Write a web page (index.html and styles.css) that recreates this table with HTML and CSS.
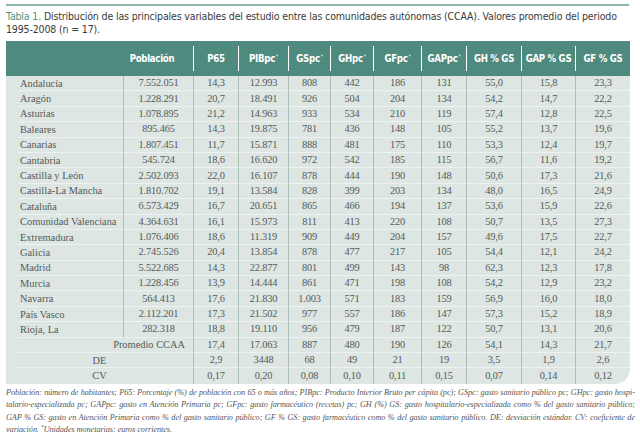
FILE: index.html
```html
<!DOCTYPE html>
<html lang="es">
<head>
<meta charset="utf-8">
<title>Tabla 1</title>
<link rel="stylesheet" href="styles.css">
</head>
<body>
<div class="page">
  <div class="rule"></div>
  <p class="title"><span class="lbl">Tabla 1.</span> Distribución de las principales variables del estudio entre las comunidades autónomas (CCAA). Valores promedio del periodo<br>1995-2008 (n = 17).</p>
  <div class="tbl">
    <table>
      <colgroup>
        <col class="c-name"><col class="c-pob"><col class="c-p65"><col class="c-pib"><col class="c-gs"><col class="c-gh"><col class="c-gf"><col class="c-gap"><col class="c-pct"><col class="c-pct2"><col class="c-pct">
      </colgroup>
      <thead>
        <tr>
          <th></th>
          <th><div class="h first">Población</div></th>
          <th><div class="h">P65</div></th>
          <th><div class="h">PIBpc<sup>*</sup></div></th>
          <th><div class="h">GSpc<sup>*</sup></div></th>
          <th><div class="h">GHpc<sup>*</sup></div></th>
          <th><div class="h">GFpc<sup>*</sup></div></th>
          <th><div class="h">GAPpc<sup>*</sup></div></th>
          <th><div class="h">GH % GS</div></th>
          <th><div class="h">GAP % GS</div></th>
          <th><div class="h">GF % GS</div></th>
        </tr>
      </thead>
      <tbody>
        <tr><td class="name">Andalucía</td><td>7.552.051</td><td>14,3</td><td>12.993</td><td>808</td><td>442</td><td>186</td><td>131</td><td>55,0</td><td>15,8</td><td>23,3</td></tr>
        <tr><td class="name">Aragón</td><td>1.228.291</td><td>20,7</td><td>18.491</td><td>926</td><td>504</td><td>204</td><td>134</td><td>54,2</td><td>14,7</td><td>22,2</td></tr>
        <tr><td class="name">Asturias</td><td>1.078.895</td><td>21,2</td><td>14.963</td><td>933</td><td>534</td><td>210</td><td>119</td><td>57,4</td><td>12,8</td><td>22,5</td></tr>
        <tr><td class="name">Baleares</td><td>895.465</td><td>14,3</td><td>19.875</td><td>781</td><td>436</td><td>148</td><td>105</td><td>55,2</td><td>13,7</td><td>19,6</td></tr>
        <tr><td class="name">Canarias</td><td>1.807.451</td><td>11,7</td><td>15.871</td><td>888</td><td>481</td><td>175</td><td>110</td><td>53,3</td><td>12,4</td><td>19,7</td></tr>
        <tr><td class="name">Cantabria</td><td>545.724</td><td>18,6</td><td>16.620</td><td>972</td><td>542</td><td>185</td><td>115</td><td>56,7</td><td>11,6</td><td>19,2</td></tr>
        <tr><td class="name">Castilla y León</td><td>2.502.093</td><td>22,0</td><td>16.107</td><td>878</td><td>444</td><td>190</td><td>148</td><td>50,6</td><td>17,3</td><td>21,6</td></tr>
        <tr><td class="name">Castilla-La Mancha</td><td>1.810.702</td><td>19,1</td><td>13.584</td><td>828</td><td>399</td><td>203</td><td>134</td><td>48,0</td><td>16,5</td><td>24,9</td></tr>
        <tr><td class="name">Cataluña</td><td>6.573.429</td><td>16,7</td><td>20.651</td><td>865</td><td>466</td><td>194</td><td>137</td><td>53,6</td><td>15,9</td><td>22,6</td></tr>
        <tr><td class="name">Comunidad Valenciana</td><td>4.364.631</td><td>16,1</td><td>15.973</td><td>811</td><td>413</td><td>220</td><td>108</td><td>50,7</td><td>13,5</td><td>27,3</td></tr>
        <tr><td class="name">Extremadura</td><td>1.076.406</td><td>18,6</td><td>11.319</td><td>909</td><td>449</td><td>204</td><td>157</td><td>49,6</td><td>17,5</td><td>22,7</td></tr>
        <tr><td class="name">Galicia</td><td>2.745.526</td><td>20,4</td><td>13.854</td><td>878</td><td>477</td><td>217</td><td>105</td><td>54,4</td><td>12,1</td><td>24,2</td></tr>
        <tr><td class="name">Madrid</td><td>5.522.685</td><td>14,3</td><td>22.877</td><td>801</td><td>499</td><td>143</td><td>98</td><td>62,3</td><td>12,3</td><td>17,8</td></tr>
        <tr><td class="name">Murcia</td><td>1.228.456</td><td>13,9</td><td>14.444</td><td>861</td><td>471</td><td>198</td><td>108</td><td>54,2</td><td>12,9</td><td>23,2</td></tr>
        <tr><td class="name">Navarra</td><td>564.413</td><td>17,6</td><td>21.830</td><td>1.003</td><td>571</td><td>183</td><td>159</td><td>56,9</td><td>16,0</td><td>18,0</td></tr>
        <tr><td class="name">País Vasco</td><td>2.112.201</td><td>17,3</td><td>21.502</td><td>977</td><td>557</td><td>186</td><td>147</td><td>57,3</td><td>15,2</td><td>18,9</td></tr>
        <tr><td class="name">Rioja, La</td><td>282.318</td><td>18,8</td><td>19.110</td><td>956</td><td>479</td><td>187</td><td>122</td><td>50,7</td><td>13,1</td><td>20,6</td></tr>
        <tr><td class="name sum prom" colspan="2">Promedio CCAA</td><td>17,4</td><td>17.063</td><td>887</td><td>480</td><td>190</td><td>126</td><td>54,1</td><td>14,3</td><td>21,7</td></tr>
        <tr><td class="name sum" colspan="2">DE</td><td>2,9</td><td>3448</td><td>68</td><td>49</td><td>21</td><td>19</td><td>3,5</td><td>1,9</td><td>2,6</td></tr>
        <tr class="last"><td class="name sum" colspan="2">CV</td><td>0,17</td><td>0,20</td><td>0,08</td><td>0,10</td><td>0,11</td><td>0,15</td><td>0,07</td><td>0,14</td><td>0,12</td></tr>
      </tbody>
    </table>
  </div>
  <div class="notes">
    <span class="ln">Población: número de habitantes; P65: Porcentaje (%) de población con 65 o más años; PIBpc: Producto Interior Bruto per cápita (pc); GSpc: gasto sanitario público pc; GHpc: gasto hospi-</span>
    <span class="ln">talario-especializada pc; GAPpc: gasto en Atención Primaria pc; GFpc: gasto farmacéutico (recetas) pc; GH (%) GS: gasto hospitalario-especializada como % del gasto sanitario público;</span>
    <span class="ln">GAP % GS: gasto en Atención Primaria como % del gasto sanitario público; GF % GS: gasto farmacéutico como % del gasto sanitario público. DE: desviación estándar. CV: coeficiente de</span>
    <span class="ln end">variación. <sup>*</sup>Unidades monetarias: euros corrientes.</span>
  </div>
</div>
</body>
</html>
```

FILE: styles.css
```css
html, body {
  margin: 0;
  padding: 0;
  background: #ffffff;
}

.page {
  padding: 4px 4px 0 6px;
}

.rule {
  width: 623px;
  height: 2px;
  background: #8fb6ad;
}

.title {
  margin: 4px 0 5px;
  font-family: "DejaVu Sans Condensed", "Roboto", sans-serif;
  font-size: 10.5px;
  line-height: 13px;
  color: #3b3b3b;
  white-space: nowrap;
  letter-spacing: -0.15px;
}

.title .lbl {
  color: #4f9484;
}

.tbl {
  width: 624px;
  background: #dde6e3;
  border-bottom-right-radius: 15px;
  overflow: hidden;
}

table {
  width: 624px;
  table-layout: fixed;
  border-collapse: separate;
  border-spacing: 0;
}

.c-name { width: 117px; }
.c-pob { width: 70px; }
.c-p65 { width: 45px; }
.c-pib { width: 50px; }
.c-gs { width: 42px; }
.c-gh { width: 43px; }
.c-gf { width: 48px; }
.c-gap { width: 45px; }
.c-pct { width: 55px; }
.c-pct2 { width: 54px; }

thead th {
  background: #4f8a7e;
  padding: 5px 0;
  height: 25px;
}

.h {
  height: 25px;
  display: flex;
  align-items: center;
  justify-content: center;
  border-left: 1px solid #ffffff;
  font-family: "DejaVu Sans Condensed", "Roboto", sans-serif;
  font-weight: bold;
  font-size: 9.6px;
  color: #ffffff;
  letter-spacing: -0.3px;
}

.h.first {
  border-left: none;
  padding-right: 12px;
}

.h sup {
  font-size: 5px;
  font-weight: normal;
  align-self: flex-start;
  margin-top: 7px;
  margin-left: 1px;
}

tbody td {
  height: 14.4px;
  padding: 0;
  border-bottom: 1px solid #eef3f1;
  font-family: "Liberation Serif", "DejaVu Serif", serif;
  font-size: 10.4px;
  line-height: 14px;
  letter-spacing: -0.2px;
  color: #555a58;
  text-align: center;
  white-space: nowrap;
}

tbody td + td {
  border-left: 1px solid #a9bcb6;
}

tbody td.name {
  text-align: left;
  padding-left: 14px;
  border-bottom: none;
  letter-spacing: 0;
  background: linear-gradient(#eef3f1, #eef3f1) no-repeat 12px 100% / calc(100% - 12px) 1px;
}

tbody td.sum {
  text-align: center;
  padding-left: 0;
}

tbody td.prom {
  text-align: right;
  padding-right: 8px;
}

tbody tr.last td {
  border-bottom-color: transparent;
}

tbody tr.last td.name {
  background: none;
}

.notes {
  margin-top: 3px;
  width: 629px;
  font-family: "Liberation Serif", "DejaVu Serif", serif;
  font-style: italic;
  font-size: 8.2px;
  letter-spacing: -0.05px;
  line-height: 12.4px;
  color: #555555;
}

.notes .ln {
  display: block;
  text-align: justify;
  text-align-last: justify;
  white-space: nowrap;
}

.notes .ln.end {
  text-align-last: left;
}

.notes sup {
  font-size: 5.5px;
  vertical-align: 3px;
  line-height: 0;
}
```
